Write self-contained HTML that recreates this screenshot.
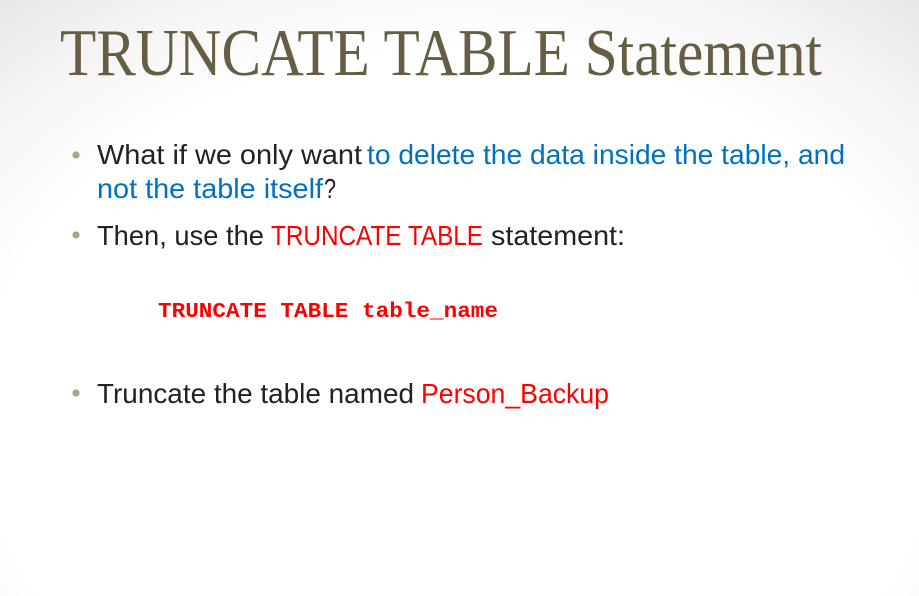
<!DOCTYPE html>
<html><head><meta charset="utf-8"><style>
html,body{margin:0;padding:0;width:919px;height:596px;overflow:hidden}
body{background:radial-gradient(ellipse 80% 95% at 50% 70%,#ffffff 65%,#f4f4f4 82%,#e4e4e4 100%)}
svg{position:absolute;left:0;top:0}
.b{font-family:"Liberation Sans",sans-serif;font-size:28px;fill:#222}
</style></head><body>
<svg width="919" height="596" xmlns="http://www.w3.org/2000/svg">
<text x="60" y="75" font-family="Liberation Serif,serif" font-size="67" fill="#675d45" textLength="762" lengthAdjust="spacingAndGlyphs">TRUNCATE TABLE Statement</text>
<circle cx="76" cy="155" r="3.6" fill="#a8a488"/>
<circle cx="76" cy="235" r="3.6" fill="#a8a488"/>
<circle cx="76" cy="393" r="3.6" fill="#a8a488"/>
<text class="b" x="97" y="164" textLength="265" lengthAdjust="spacingAndGlyphs">What if we only want</text>
<text class="b" x="367" y="164" style="fill:#0070c0" textLength="478" lengthAdjust="spacingAndGlyphs">to delete the data inside the table, and</text>
<text class="b" x="97" y="198" style="fill:#0070c0" textLength="226" lengthAdjust="spacingAndGlyphs">not the table itself</text>
<text class="b" x="324" y="198" textLength="12" lengthAdjust="spacingAndGlyphs">?</text>
<text class="b" x="97" y="245" textLength="167" lengthAdjust="spacingAndGlyphs">Then, use the</text>
<text class="b" x="271" y="245" style="fill:#ff0000" textLength="212" lengthAdjust="spacingAndGlyphs">TRUNCATE TABLE</text>
<text class="b" x="491" y="245" textLength="134" lengthAdjust="spacingAndGlyphs">statement:</text>
<text x="158" y="317" font-family="Liberation Mono,monospace" font-weight="bold" font-size="21" fill="#ff0000" textLength="340" lengthAdjust="spacingAndGlyphs">TRUNCATE TABLE table_name</text>
<text class="b" x="97" y="403" textLength="317" lengthAdjust="spacingAndGlyphs">Truncate the table named</text>
<text class="b" x="421" y="403" style="fill:#ff0000" textLength="188" lengthAdjust="spacingAndGlyphs">Person_Backup</text>
</svg>
</body></html>
